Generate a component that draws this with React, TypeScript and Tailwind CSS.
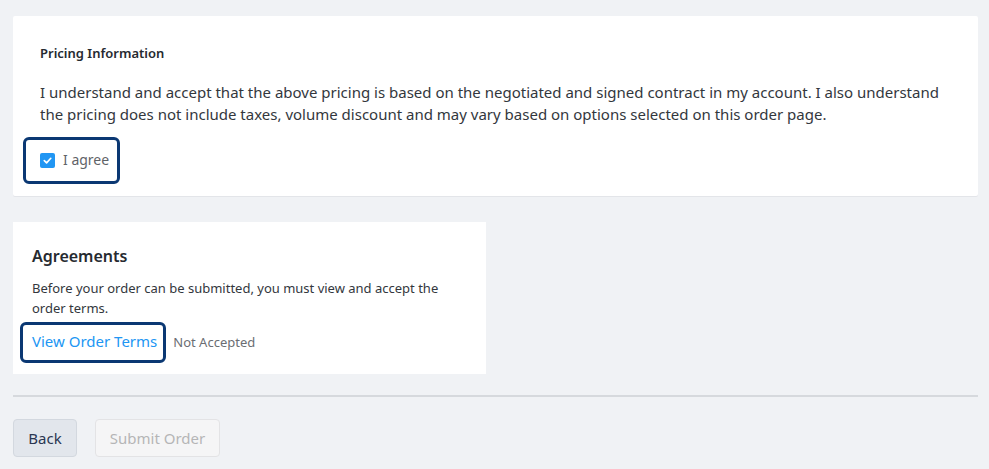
import React, { useState } from "react";

export default function App() {
  const [agreed, setAgreed] = useState(true);

  return (
    <div
      className="min-h-screen w-full bg-[#f0f2f5] pl-[13px] pr-[11px] pt-[16px] pb-4 text-[#2b2f36]"
      style={{ fontFamily: '"Noto Sans", "Open Sans", sans-serif' }}
    >
      {/* pricing */}
      <div className="bg-white rounded-[2px] shadow-[0_1px_0_#e3e5e9] pl-[27px] pr-6 pt-[28px] pb-[12px]">
        <h3 className="text-[13px] leading-[18px] font-semibold text-[#262a30]">
          Pricing Information
        </h3>
        <p className="mt-[19px] text-[15px] leading-[22px] text-[#33373d]">
          I understand and accept that the above pricing is based on the negotiated and signed contract in my account. I also understand the pricing does not include taxes, volume discount and may vary based on options selected on this order page.
        </p>
        <label className="mt-[12px] -ml-[17px] flex w-[97px] h-[47px] items-center gap-[8px] rounded-[6px] border-[3px] border-[#0b3873] pl-[14px] pb-[1px] cursor-pointer">
          <span
            onClick={() => setAgreed(!agreed)}
            className={`flex h-[15px] w-[15px] items-center justify-center rounded-[2px] ${
              agreed ? "bg-[#2196f3]" : "border border-gray-400 bg-white"
            }`}
          >
            {agreed && (
              <svg width="11" height="11" viewBox="0 0 12 12" fill="none">
                <path d="M2.5 6.2 L5 8.6 L9.6 3.6" stroke="white" strokeWidth="1.8" strokeLinecap="round" strokeLinejoin="round" />
              </svg>
            )}
          </span>
          <span className="text-[14px] text-[#5f6368] leading-5">I agree</span>
        </label>
      </div>

      {/* agreements */}
      <div className="mt-[26px] w-[473px] bg-white pl-[19px] pr-4 pt-[22px] pb-[11px]">
        <h3 className="text-[16px] leading-[24px] font-semibold text-[#262a30]">Agreements</h3>
        <p className="mt-[10px] text-[13px] leading-[20px] text-[#33373d] pr-[20px]">
          Before your order can be submitted, you must view and accept the order terms.
        </p>
        <div className="mt-[4px] flex items-center">
          <a
            href="#"
            className="-ml-[12px] flex h-[41px] items-center rounded-[6px] border-[3px] border-[#0b3873] pl-[9px] pr-[6px] pb-[2px] text-[15px] text-[#2196f3]"
          >
            View Order Terms
          </a>
          <span className="ml-[7px] text-[13px] text-[#6b6e73]">Not Accepted</span>
        </div>
      </div>

      <div className="mt-[21px] h-[2px] bg-[#d6d9dd]" />

      <div className="mt-[22px] flex gap-[18px]">
        <button className="h-[38px] w-[64px] rounded-[4px] border border-[#d3d8df] bg-[#e2e6ec] text-[15px] text-[#2a3652]">
          Back
        </button>
        <button
          disabled
          className="h-[38px] w-[125px] rounded-[4px] border border-[#e3e3e5] bg-[#f5f5f6] text-[15px] text-[#b5b5b7]"
        >
          Submit Order
        </button>
      </div>
    </div>
  );
}
